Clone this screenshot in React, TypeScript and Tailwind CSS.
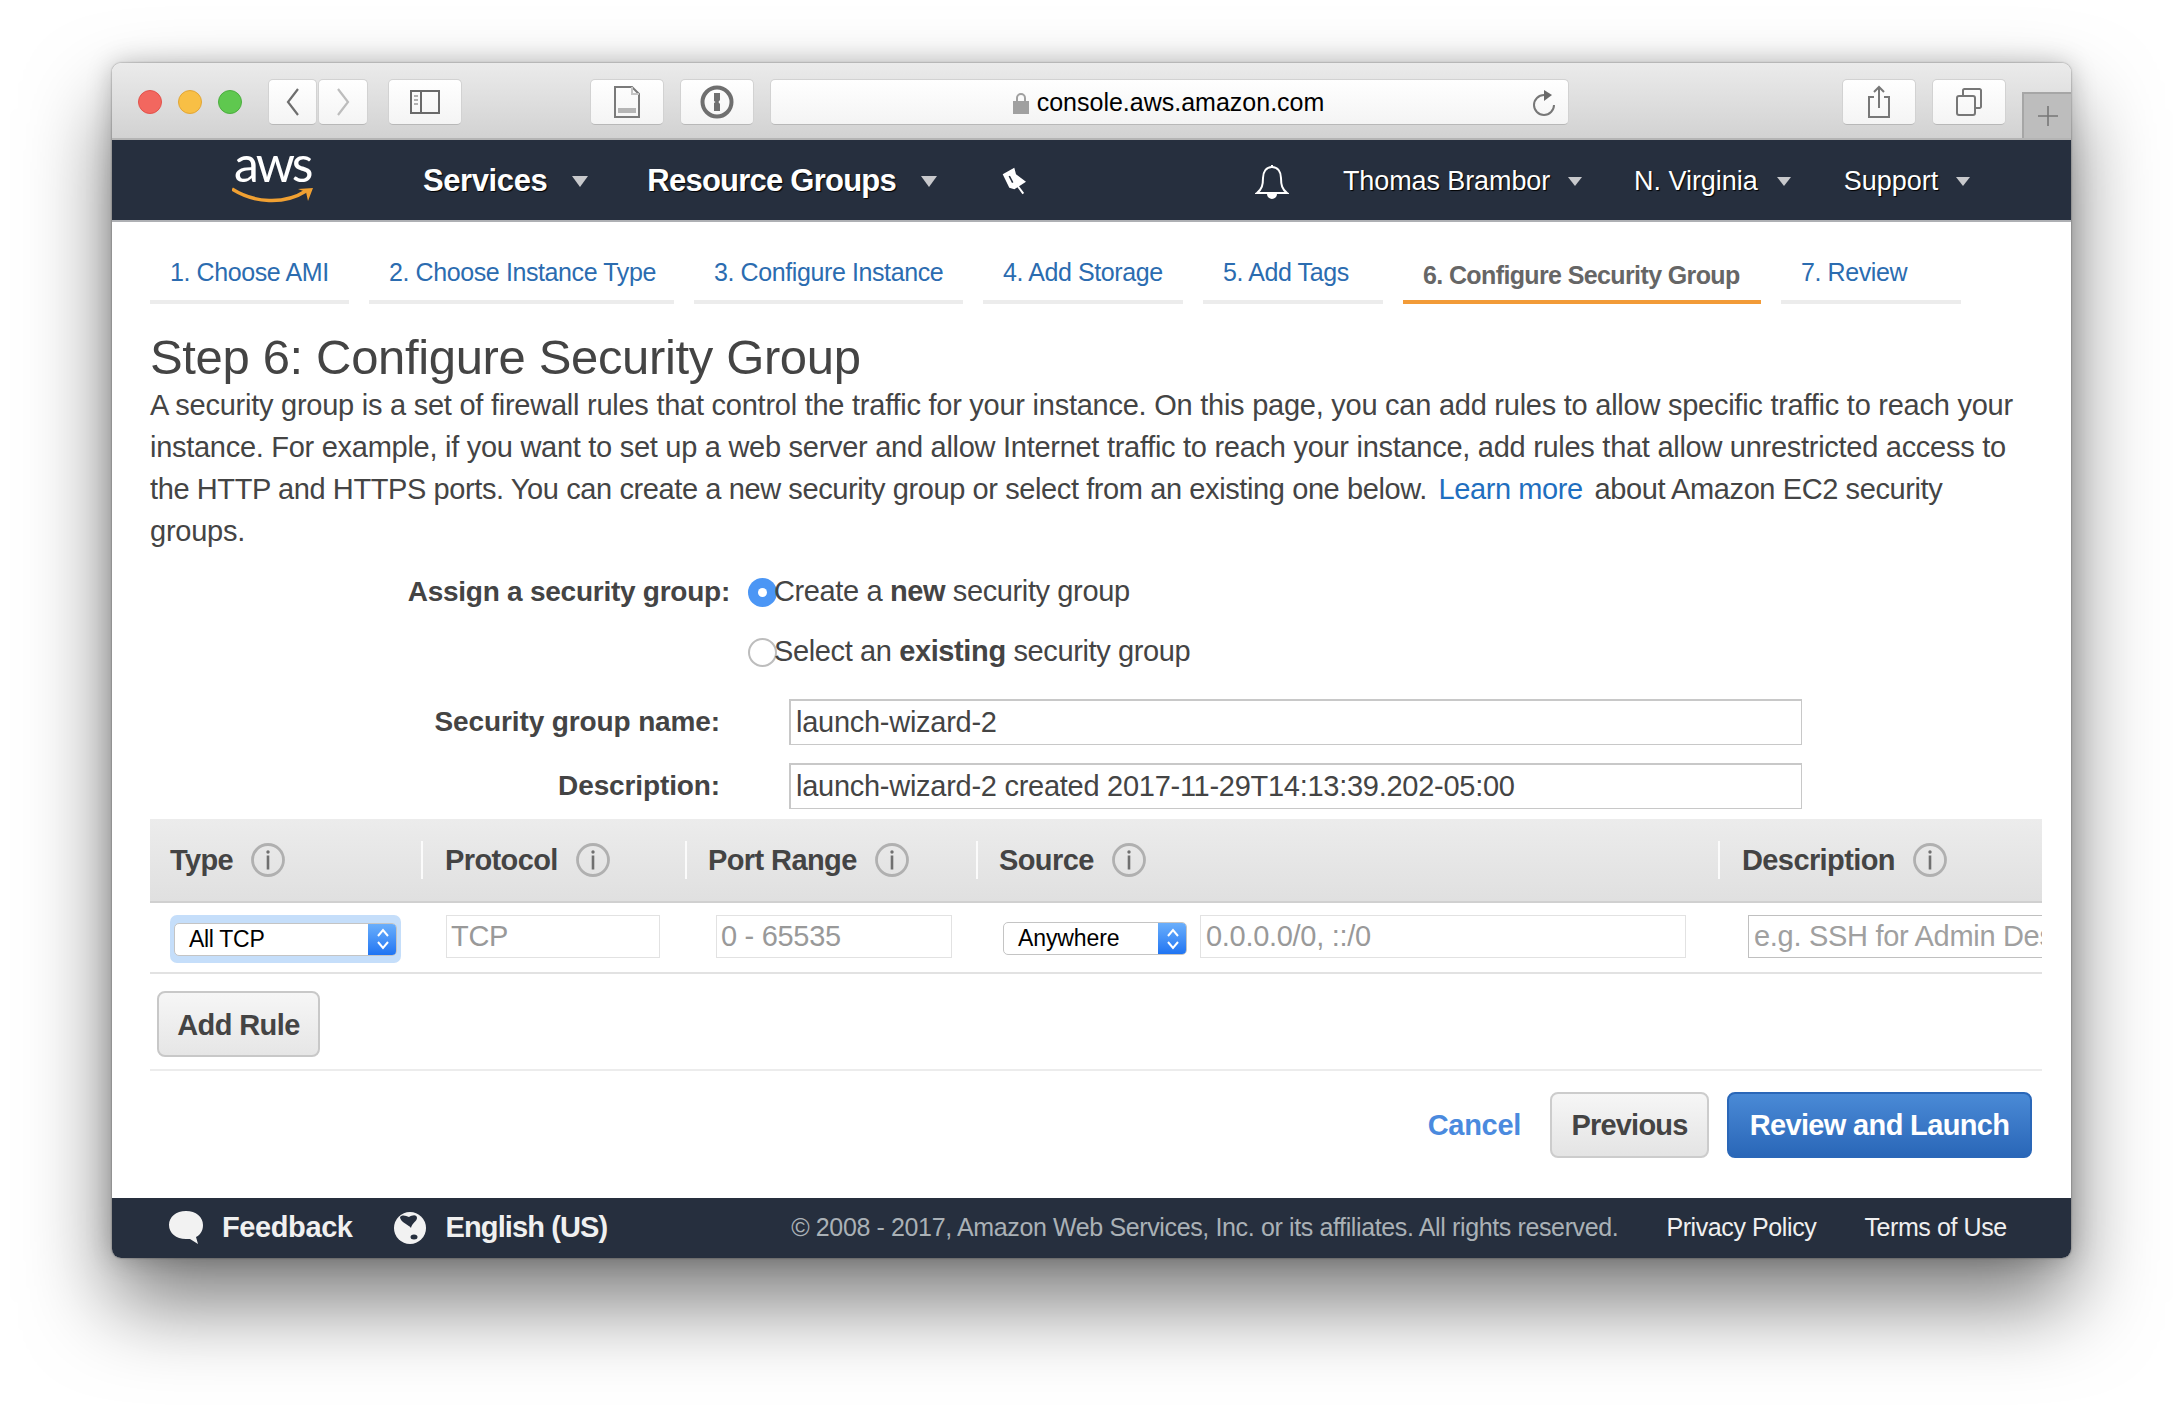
import React from "react";

const tabs = [
  { label: "1. Choose AMI", w: "w-[199px]" },
  { label: "2. Choose Instance Type", w: "w-[305px]" },
  { label: "3. Configure Instance", w: "w-[269px]" },
  { label: "4. Add Storage", w: "w-[200px]" },
  { label: "5. Add Tags", w: "w-[180px]" },
  { label: "6. Configure Security Group", w: "w-[358px]", active: true },
  { label: "7. Review", w: "w-[180px]" },
];

function ToolButton({ className, children }: { className: string; children?: React.ReactNode }) {
  return (
    <div className={`h-[46px] flex items-center justify-center rounded-[5px] border border-[#d2d2d2] border-b-[#b8b8b8] bg-gradient-to-b from-white to-[#f4f4f4] ${className}`}>
      {children}
    </div>
  );
}

function Caret({ small }: { small?: boolean }) {
  return small ? (
    <svg width="14" height="9" viewBox="0 0 14 9" className="shrink-0">
      <path d="M0 0h14L7 9z" fill="#c8c9cc" />
    </svg>
  ) : (
    <svg width="18" height="11" viewBox="0 0 18 11" className="shrink-0">
      <path d="M1 0h16L9 11z" fill="#c8c9cc" />
    </svg>
  );
}

function Info({ className = "" }: { className?: string }) {
  return (
    <svg width="34" height="34" viewBox="0 0 34 34" className={`shrink-0 ${className}`}>
      <circle cx="17" cy="17" r="15.5" fill="none" stroke="#b0b0b0" strokeWidth="2.8" />
      <circle cx="17" cy="9" r="1.7" fill="#707070" />
      <rect x="15.7" y="12.5" width="2.6" height="14" fill="#707070" />
    </svg>
  );
}

function Stepper() {
  return (
    <div className="w-[29px] self-stretch flex items-center justify-center rounded-r-[5px] bg-gradient-to-b from-[#6cb0fb] to-[#1c72f2] -my-px -mr-px">
      <svg width="14" height="24" viewBox="0 0 14 24" fill="none" stroke="#fff" strokeWidth="2">
        <path d="M2 9l5-6 5 6M2 15l5 6 5-6" />
      </svg>
    </div>
  );
}

function HeadCell({ label, className }: { label: string; className: string }) {
  return (
    <div className={`flex items-center ${className}`}>
      <span className="pt-[2px] text-[29px] font-bold tracking-[-0.6px] text-[#444]">{label}</span>
      <Info className="ml-[18px]" />
    </div>
  );
}

function Sep() {
  return <div className="w-[2px] h-[38px] bg-[#fbfbfb] shrink-0" />;
}

export default function App() {
  return (
    <div className="w-[2182px] h-[1416px] overflow-hidden bg-white pt-[63px] pl-[112px] font-['Liberation_Sans',sans-serif]">
      <div className="w-[1959px] h-[1195px] flex flex-col rounded-[9px] overflow-hidden bg-white shadow-[0_45px_85px_rgba(0,0,0,0.52),0_0_26px_rgba(0,0,0,0.22),0_0_2px_rgba(0,0,0,0.5)]">
        {/* Safari toolbar */}
        <div className="h-[77px] shrink-0 flex items-start bg-gradient-to-b from-[#ebebeb] to-[#d2d2d2] border-b-2 border-[#b4b4b4] pt-[16px] relative">
          <div className="ml-[26px] mt-[11px] flex gap-[16px]">
            <div className="w-[24px] h-[24px] rounded-full bg-[#f2675f] border border-[#e2524b]" />
            <div className="w-[24px] h-[24px] rounded-full bg-[#f8bf45] border border-[#e2a636]" />
            <div className="w-[24px] h-[24px] rounded-full bg-[#5fc84f] border border-[#4cae3f]" />
          </div>
          <ToolButton className="ml-[26px] w-[49px]">
            <svg width="16" height="30" viewBox="0 0 16 30" fill="none" stroke="#6e6e6e" strokeWidth="2.2">
              <path d="M13 2L3 15l10 13" />
            </svg>
          </ToolButton>
          <ToolButton className="ml-px w-[50px]">
            <svg width="16" height="30" viewBox="0 0 16 30" fill="none" stroke="#bdbdbd" strokeWidth="2.2">
              <path d="M3 2l10 13L3 28" />
            </svg>
          </ToolButton>
          <ToolButton className="ml-[20px] w-[74px]">
            <svg width="30" height="24" viewBox="0 0 30 24" fill="none" stroke="#6a6a6a" strokeWidth="2">
              <rect x="1" y="1" width="28" height="22" />
              <path d="M11 1v22" />
              <path d="M4 6h4M4 10h4M4 14h4" strokeWidth="1.6" stroke="#999" />
            </svg>
          </ToolButton>
          <ToolButton className="ml-[128px] w-[74px]">
            <svg width="28" height="32" viewBox="0 0 28 32" fill="none" stroke="#7a7a7a" strokeWidth="2">
              <path d="M2 1h17l7 7v23H2z" />
              <path d="M19 1v7h7" stroke="#c4c4c4" />
              <rect x="5" y="22" width="18" height="5" fill="#b5b5b5" stroke="none" />
            </svg>
          </ToolButton>
          <ToolButton className="ml-[16px] w-[74px]">
            <svg width="34" height="34" viewBox="0 0 34 34">
              <circle cx="17" cy="17" r="14.5" fill="none" stroke="#6f6f6f" strokeWidth="4" />
              <path d="M14 8h6v7l-1.6 2 1.6 2v7h-6v-8l1.5-1-1.500-1z" fill="#6f6f6f" />
            </svg>
          </ToolButton>
          <ToolButton className="ml-[16px] w-[799px] relative pt-[2px]">
            <svg width="18" height="22" viewBox="0 0 18 22" className="mr-[7px] -ml-[3px]">
              <path d="M5 10V6a4 4 0 018 0v4" fill="none" stroke="#a0a0a0" strokeWidth="2" />
              <rect x="1" y="9" width="16" height="13" fill="#a0a0a0" />
            </svg>
            <span className="text-[25px] text-black">console.aws.amazon.com</span>
            <svg width="26" height="30" viewBox="0 0 26 30" fill="none" className="absolute right-[9px] top-[6px]">
              <path d="M11 9A10 10 0 1 0 21 19" stroke="#777" strokeWidth="2" />
              <path d="M11 4l8 5-8 6z" fill="#6a6a6a" />
            </svg>
          </ToolButton>
          <ToolButton className="ml-[273px] w-[74px]">
            <svg width="24" height="34" viewBox="0 0 24 34" fill="none" stroke="#777" strokeWidth="2">
              <path d="M7 12H2v20h20V12h-5" />
              <path d="M12 23V2M7 7l5-5 5 5" />
            </svg>
          </ToolButton>
          <ToolButton className="ml-[16px] w-[74px]">
            <svg width="26" height="28" viewBox="0 0 26 28" fill="none" stroke="#777" strokeWidth="2">
              <rect x="1" y="8" width="18" height="19" rx="2" />
              <path d="M7 8V2.500a1.500 1.500 0 011.500-1.500H23.500A1.500 1.500 0 0125 2.500V18.500a1.500 1.500 0 01-1.500 1.500H19" />
            </svg>
          </ToolButton>
          <div className="absolute right-0 bottom-0 w-[49px] h-[46px] bg-[#bdbdbd] border-l-2 border-t-2 border-[#a6a6a6] flex items-center justify-center">
            <svg width="22" height="22" viewBox="0 0 22 22" stroke="#777" strokeWidth="1.6">
              <path d="M11 1v20M1 11h20" />
            </svg>
          </div>
        </div>

        {/* AWS nav */}
        <div className="h-[82px] shrink-0 flex items-center pt-[3px] bg-[#262f3e] border-b-2 border-[#aeb0b4] text-white [text-shadow:1px_1px_1px_#000]">
          <div className="ml-[120px] w-[83px] h-[70px] relative">
            <span className="absolute left-[2px] top-[-9px] text-[50px] leading-[50px] tracking-[-3px] font-['Lato',sans-serif] [text-shadow:none]">aws</span>
            <svg width="84" height="18" viewBox="0 0 84 18" className="absolute left-0 top-[40px]" fill="none">
              <path d="M0 2C22 16 52 18 74 4" stroke="#f0a032" strokeWidth="3.500" />
              <path d="M66 2l15-1-5 13-2-9z" fill="#f0a032" />
            </svg>
          </div>
          <span className="ml-[108px] text-[31px] font-bold tracking-[-0.4px]">Services</span>
          <span className="ml-[24px]"><Caret /></span>
          <span className="ml-[58px] text-[31px] font-bold tracking-[-0.77px]">Resource Groups</span>
          <span className="ml-[24px]"><Caret /></span>
          <svg width="28" height="30" viewBox="0 0 28 30" className="ml-[63px] -mt-[3px]" fill="none">
            <path d="M1.700 9.300L13.300 2.700 15 9.300l10 7.400-11.700 7.600-5-1.600z" fill="#fff" />
            <path d="M16.700 21l5.600 7.700" stroke="#fff" strokeWidth="2" />
            <path d="M8.300 11l3.400 6.700" stroke="#262f3e" strokeWidth="1.600" />
          </svg>
          <svg width="34" height="36" viewBox="0 0 34 36" className="ml-[226px]" fill="none" stroke="#fff" strokeWidth="2">
            <path d="M17 3c-6 0-9 5-9 11 0 7-1 11-6 15h30c-5-4-6-8-6-15 0-6-3-11-9-11z" />
            <path d="M13 30a4 4 0 008 0z" fill="#fff" />
            <path d="M17 1v2" />
          </svg>
          <span className="ml-[54px] text-[27px] tracking-[-0.1px]">Thomas Brambor</span>
          <span className="ml-[18px]"><Caret small /></span>
          <span className="ml-[52px] text-[27px] tracking-[-0.05px]">N. Virginia</span>
          <span className="ml-[19px]"><Caret small /></span>
          <span className="ml-[53px] text-[27px] tracking-[0px]">Support</span>
          <span className="ml-[18px]"><Caret small /></span>
        </div>

        {/* Wizard steps */}
        <div className="flex gap-[20px] pl-[38px] shrink-0">
          {tabs.map((t) => (
            <div
              key={t.label}
              className={`${t.w} h-[82px] pl-[20px] flex items-end border-b-4 text-[25px] leading-[34px] whitespace-nowrap ${
                t.active
                  ? "border-[#f29b38] pb-[8px] font-bold text-[#666] tracking-[-0.62px] -mb-px"
                  : "border-[#ececec] pb-[11px] text-[#2b6cb0] tracking-[-0.4px]"
              }`}
            >
              {t.label}
            </div>
          ))}
        </div>

        <div className="flex-1 flex flex-col pl-[38px] pr-[28px]">
          <h1 className="mt-[26px] text-[49px] leading-[54px] tracking-[-0.35px] text-[#444]">Step 6: Configure Security Group</h1>
          <p className="w-[1890px] text-[29px] leading-[42px] whitespace-nowrap text-[#444]">
            <span className="block tracking-[-0.25px]">A security group is a set of firewall rules that control the traffic for your instance. On this page, you can add rules to allow specific traffic to reach your</span>
            <span className="block tracking-[-0.28px]">instance. For example, if you want to set up a web server and allow Internet traffic to reach your instance, add rules that allow unrestricted access to</span>
            <span className="block tracking-[-0.4px]">the HTTP and HTTPS ports. You can create a new security group or select from an existing one below. <span className="text-[#1f6fc0] ml-[4px] mr-[4px]">Learn more</span> about Amazon EC2 security</span>
            <span className="block tracking-[-0.25px]">groups.</span>
          </p>

          {/* Form */}
          <div className="mt-[19px] flex items-center h-[42px] text-[29px] tracking-[-0.38px] text-[#444]">
            <label className="w-[580px] text-right text-[28px] tracking-[-0.25px] font-bold">Assign a security group:</label>
            <div className="ml-[18px] w-[29px] h-[29px] rounded-full bg-[#4b96f5] flex items-center justify-center shrink-0">
              <div className="w-[9px] h-[9px] rounded-full bg-white" />
            </div>
            <span className="-ml-[3px]">Create a <b>new</b> security group</span>
          </div>
          <div className="mt-[18px] flex items-center h-[42px] text-[29px] tracking-[-0.38px] text-[#444]">
            <div className="ml-[598px] w-[29px] h-[29px] rounded-full bg-white border-2 border-[#bdbdbd] shrink-0" />
            <span className="-ml-[3px]">Select an <b>existing</b> security group</span>
          </div>
          <div className="mt-[26px] flex items-center h-[46px] text-[29px] tracking-[-0.27px] text-[#444]">
            <label className="w-[570px] text-right text-[28px] tracking-[-0.12px] font-bold">Security group name:</label>
            <div className="ml-[69px] w-[1013px] h-[46px] px-[5px] flex items-center border-2 border-[#c8c8c8] border-r border-b">launch-wizard-2</div>
          </div>
          <div className="mt-[18px] flex items-center h-[46px] text-[29px] tracking-[-0.27px] text-[#444]">
            <label className="w-[570px] text-right text-[28px] tracking-[-0.12px] font-bold">Description:</label>
            <div className="ml-[69px] w-[1013px] h-[46px] px-[5px] flex items-center border-2 border-[#c8c8c8] border-r border-b">launch-wizard-2 created 2017-11-29T14:13:39.202-05:00</div>
          </div>

          {/* Rules table */}
          <div className="mt-[10px] w-[1892px] h-[84px] flex items-center bg-gradient-to-b from-[#ececec] to-[#e0e0e0] border-b-2 border-[#d0d0d0]">
            <HeadCell label="Type" className="ml-[20px] w-[251px]" />
            <Sep />
            <HeadCell label="Protocol" className="ml-[22px] w-[240px]" />
            <Sep />
            <HeadCell label="Port Range" className="ml-[21px] w-[268px]" />
            <Sep />
            <HeadCell label="Source" className="ml-[21px] w-[719px]" />
            <Sep />
            <HeadCell label="Description" className="ml-[22px]" />
          </div>
          <div className="w-[1892px] h-[71px] flex items-start overflow-hidden border-b-2 border-[#e2e2e2] pt-[12px] text-[29px] tracking-[-0.3px]">
            <div className="ml-[20px] w-[231px] h-[48px] rounded-[7px] bg-[#c5defa] flex items-center justify-center shrink-0">
              <div className="w-[223px] h-[33px] flex items-center justify-between rounded-[5px] bg-white border border-[#c4c4c4] overflow-hidden pl-[14px] text-[23px] text-black">
                All TCP
                <Stepper />
              </div>
            </div>
            <div className="ml-[45px] w-[214px] h-[43px] px-[4px] pt-[1px] flex items-center border border-[#e2e2e2] text-[#999] shrink-0">TCP</div>
            <div className="ml-[56px] w-[236px] h-[43px] px-[4px] pt-[1px] flex items-center border border-[#e2e2e2] text-[#999] shrink-0">0 - 65535</div>
            <div className="ml-[51px] mt-[7px] w-[184px] h-[33px] flex items-center justify-between rounded-[5px] bg-white border border-[#c4c4c4] overflow-hidden pl-[14px] text-[23px] tracking-[-0.1px] text-black shrink-0">
              Anywhere
              <Stepper />
            </div>
            <div className="ml-[13px] w-[486px] h-[43px] px-[5px] pt-[1px] flex items-center border border-[#e2e2e2] text-[#999] shrink-0">0.0.0.0/0, ::/0</div>
            <div className="ml-[62px] w-[320px] h-[43px] px-[5px] pt-[1px] flex items-center border border-[#c0c0c0] text-[#a0a0a0] whitespace-nowrap shrink-0">e.g. SSH for Admin Desktop</div>
          </div>
          <div className="mt-[17px] ml-[7px] w-[163px] h-[66px] pt-[3px] flex items-center justify-center rounded-[8px] border-2 border-[#c8c8c8] bg-gradient-to-b from-[#f6f6f6] to-[#e6e6e6] text-[29px] font-bold tracking-[-0.6px] text-[#444]">Add Rule</div>
          <div className="mt-[12px] w-[1892px] h-[2px] bg-[#ececec]" />

          {/* Actions */}
          <div className="mt-[21px] w-[1882px] flex items-center justify-end">
            <span className="pt-[2px] text-[29px] font-bold tracking-[-0.3px] text-[#4a8ade]">Cancel</span>
            <div className="ml-[29px] w-[159px] h-[66px] pt-[2px] flex items-center justify-center rounded-[8px] border-2 border-[#cccccc] bg-gradient-to-b from-[#f6f6f6] to-[#e4e4e4] text-[29px] font-bold tracking-[-0.8px] text-[#444]">Previous</div>
            <div className="ml-[18px] w-[305px] h-[66px] pt-[2px] flex items-center justify-center rounded-[8px] border-2 border-[#2a67b8] bg-gradient-to-b from-[#4a8ad6] to-[#2a67b8] text-[29px] font-bold tracking-[-0.65px] text-white">Review and Launch</div>
          </div>
        </div>

        {/* Footer */}
        <div className="h-[60px] shrink-0 flex items-center bg-[#262f3e] text-[#f0f0f0]">
          <svg width="36" height="36" viewBox="0 0 36 36" className="ml-[56px]" fill="#f2f2f2">
            <path d="M18 1c10 0 17 6 17 14 0 6-3 10-7 12l2 7-8-5c-1 0-3 0-4 0C8 29 1 23 1 15S8 1 18 1z" />
          </svg>
          <span className="ml-[18px] text-[29px] font-bold tracking-[-0.4px]">Feedback</span>
          <svg width="34" height="34" viewBox="0 0 34 34" className="ml-[40px]">
            <circle cx="17" cy="17" r="16" fill="#f2f2f2" />
            <path d="M7 6c3-3 6-1 9 0 3-2 8-3 8 1 0 3-5 5-6 10-2-3-11-6-11-11z" fill="#262f3e" />
            <ellipse cx="21" cy="26" rx="3.500" ry="2.500" fill="#262f3e" />
          </svg>
          <span className="ml-[19px] text-[29px] font-bold tracking-[-0.9px]">English (US)</span>
          <span className="ml-[184px] text-[25px] tracking-[-0.37px] text-[#aab1b6]">© 2008 - 2017, Amazon Web Services, Inc. or its affiliates. All rights reserved.</span>
          <span className="ml-[48px] text-[25px] tracking-[-0.4px]">Privacy Policy</span>
          <span className="ml-[48px] text-[25px] tracking-[-0.4px]">Terms of Use</span>
        </div>
      </div>
    </div>
  );
}
